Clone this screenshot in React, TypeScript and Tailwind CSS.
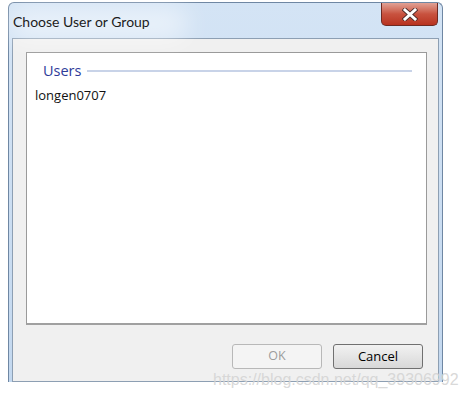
export default function App() {
  return (
    <div className="relative w-[466px] h-[395px] overflow-hidden bg-white" style={{ fontFamily: '"Open Sans", "Noto Sans", sans-serif' }}>
      <div className="absolute left-[8px] top-[2px] w-[435px] h-[380px] rounded-t-[6px] border border-b-0 border-[#6f87a3] bg-gradient-to-b from-[#d4e4f5] to-[#c3d8ef] flex flex-col px-[3px]">
        {/* title bar */}
        <div className="relative h-[35px] shrink-0 flex items-center">
          <div className="absolute left-[-4px] top-[4px] w-[180px] h-[34px] rounded-full bg-white/50 blur-md" />
          <span className="relative pl-[1px] pt-[1px] text-[14px] text-[#1c1c1c]" style={{ fontFamily: 'Lato, "Open Sans", sans-serif' }}>Choose User or Group</span>
          <div className="absolute right-[1px] top-[0px] w-[57px] h-[23px] rounded-b-[5px] border border-t-0 border-[#6e2a22] bg-gradient-to-b from-[#e0a195] via-[#c8523f] to-[#b8321f] flex items-center justify-center">
            <svg width="16" height="13" viewBox="0 0 16 13">
              <path d="M3 2 L13 11 M13 2 L3 11" stroke="#4a2a28" strokeWidth="4.6" strokeLinecap="square" />
              <path d="M3 2 L13 11 M13 2 L3 11" stroke="#ffffff" strokeWidth="3" strokeLinecap="square" />
            </svg>
          </div>
        </div>
        {/* client area */}
        <div className="flex-1 border border-[#8d9fb3] bg-[#f0f0f0] flex flex-col pl-[13px] pr-[11px] pt-[13px]">
          <div className="h-[273px] border border-[#9a9a9a] border-b-2 border-b-[#a0a0a0] bg-white pl-[8px] pr-[14px] pt-[9px]">
            <div className="flex items-center">
              <span className="pl-[8px] pr-[6px] text-[14.5px] leading-[18px] text-[#2e3b99]">Users</span>
              <div className="flex-1 h-[2px] bg-[#c8d3e8]" />
            </div>
            <div className="mt-[7px] text-[13px] leading-[16px] text-[#111]">longen0707</div>
          </div>
          <div className="mt-[19px] flex justify-end gap-[11px] pr-[4px]">
            <div className="w-[90px] h-[25px] rounded-[3px] border border-[#b8b8b8] bg-[#f4f4f4] flex items-center justify-center text-[12.5px] text-[#9c9c9c]">OK</div>
            <div className="w-[90px] h-[25px] rounded-[3px] border border-[#707070] bg-gradient-to-b from-[#f2f2f2] to-[#d8d8d8] flex items-center justify-center text-[13px] text-black">Cancel</div>
          </div>
        </div>
      </div>
      <div className="absolute left-[213px] top-[370px] text-[16px] leading-[20px] text-[#d4d4d4]/90" style={{ fontFamily: '"Liberation Sans", Arial, sans-serif' }}>
        https://blog.csdn.net/qq_39306992
      </div>
    </div>
  )
}
